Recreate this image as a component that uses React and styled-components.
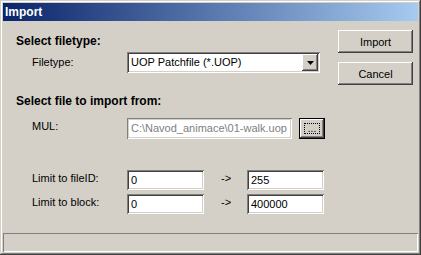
import styled, { createGlobalStyle } from "styled-components";

const GlobalStyle = createGlobalStyle`
  html, body {
    margin: 0;
    padding: 0;
    background: #d4d0c8;
  }
  * {
    box-sizing: border-box;
  }
`;

const Window = styled.div`
  width: 421px;
  height: 255px;
  padding: 3px;
  display: flex;
  flex-direction: column;
  background: #d4d0c8;
  font-family: "Liberation Sans", Arial, sans-serif;
  font-size: 11px;
  color: #000;
  box-shadow: inset -1px -1px #404040, inset 1px 1px #d4d0c8,
    inset -2px -2px #808080, inset 2px 2px #ffffff;
`;

const TitleBar = styled.div`
  height: 18px;
  flex: none;
  display: flex;
  align-items: center;
  padding-left: 2px;
  background: linear-gradient(to right, #0a246a, #a6caf0);
  color: #fff;
  font-weight: bold;
  font-size: 12px;
`;

const Body = styled.div`
  flex: 1;
  display: flex;
`;

const Main = styled.div`
  flex: 1;
  padding: 13px 0 0 13px;
  display: flex;
  flex-direction: column;
`;

const Heading = styled.div`
  font-weight: bold;
  font-size: 12px;
  line-height: 14px;
  margin-top: ${(p) => p.$top || 0}px;
`;

const Row = styled.div`
  display: flex;
  align-items: ${(p) => p.$align || "flex-start"};
  margin-top: ${(p) => p.$top || 0}px;
`;

const Label = styled.div`
  width: 111px;
  padding-left: 16px;
  line-height: 13px;
  margin-top: ${(p) => p.$offset || 0}px;
`;

const sunken = `
  background: #fff;
  box-shadow: inset 1px 1px #808080, inset -1px -1px #fff,
    inset 2px 2px #404040, inset -2px -2px #d4d0c8;
`;

const Field = styled.div`
  ${sunken}
  width: ${(p) => p.$w}px;
  height: ${(p) => p.$h || 20}px;
  padding: 0 4px;
  display: flex;
  align-items: center;
  line-height: 13px;
  white-space: nowrap;
  overflow: hidden;
  color: ${(p) => (p.$disabled ? "#808080" : "#000")};
  ${(p) =>
    p.$disabled &&
    `box-shadow: inset 1px 1px #808080, inset -1px -1px #fff,
      inset 2px 2px #d4d0c8, inset -2px -2px #d4d0c8;`}
`;

const Combo = styled.div`
  ${sunken}
  width: 193px;
  height: 21px;
  padding: 2px 2px 2px 4px;
  display: flex;
  align-items: center;
  justify-content: space-between;
  line-height: 13px;
`;

const raised = `
  background: #d4d0c8;
  box-shadow: inset -1px -1px #404040, inset 1px 1px #fff,
    inset -2px -2px #808080, inset 2px 2px #d4d0c8;
`;

const ArrowButton = styled.div`
  ${raised}
  width: 16px;
  height: 17px;
  display: flex;
  align-items: center;
  justify-content: center;
`;

const Button = styled.div`
  ${raised}
  width: 75px;
  height: 23px;
  display: flex;
  align-items: center;
  justify-content: center;
  margin-top: ${(p) => p.$top || 0}px;
`;

const BrowseButton = styled.div`
  width: 26px;
  height: 21px;
  margin-left: 7px;
  padding: 4px;
  background: #d4d0c8;
  border: 1px solid #000;
  box-shadow: inset -1px -1px #404040, inset 1px 1px #fff,
    inset -2px -2px #808080;
`;

const Focus = styled.div`
  width: 100%;
  height: 100%;
  border: 1px dotted #000;
  display: flex;
  align-items: flex-end;
  justify-content: center;
  font-size: 10px;
  line-height: 9px;
  letter-spacing: 0;
`;

const Arrow = styled.div`
  width: 43px;
  padding-left: 17px;
  line-height: 13px;
  margin-top: 2px;
`;

const Side = styled.div`
  width: 80px;
  padding-top: 9px;
  display: flex;
  flex-direction: column;
`;

const StatusBar = styled.div`
  height: 19px;
  flex: none;
  box-shadow: inset 1px 1px #808080, inset -1px -1px #fff;
`;

export default function App() {
  return (
    <>
      <GlobalStyle />
      <Window>
        <TitleBar>Import</TitleBar>
        <Body>
          <Main>
            <Heading>Select filetype:</Heading>
            <Row $top={4} $align="center">
              <Label>Filetype:</Label>
              <Combo>
                <span>UOP Patchfile (*.UOP)</span>
                <ArrowButton>
                  <svg width="7" height="4" viewBox="0 0 7 4">
                    <path d="M0 0h7L3.5 4z" fill="#000" />
                  </svg>
                </ArrowButton>
              </Combo>
            </Row>
            <Heading $top={21}>Select file to import from:</Heading>
            <Row $top={10}>
              <Label $offset={2}>MUL:</Label>
              <Field $w={165} $h={21} $disabled>
                C:\Navod_animace\01-walk.uop
              </Field>
              <BrowseButton>
                <Focus>...</Focus>
              </BrowseButton>
            </Row>
            <Row $top={31}>
              <Label $offset={2}>Limit to fileID:</Label>
              <Field $w={77}>0</Field>
              <Arrow>-&gt;</Arrow>
              <Field $w={77}>255</Field>
            </Row>
            <Row $top={4}>
              <Label $offset={2}>Limit to block:</Label>
              <Field $w={77}>0</Field>
              <Arrow>-&gt;</Arrow>
              <Field $w={77}>400000</Field>
            </Row>
          </Main>
          <Side>
            <Button>Import</Button>
            <Button $top={9}>Cancel</Button>
          </Side>
        </Body>
        <StatusBar />
      </Window>
    </>
  );
}
